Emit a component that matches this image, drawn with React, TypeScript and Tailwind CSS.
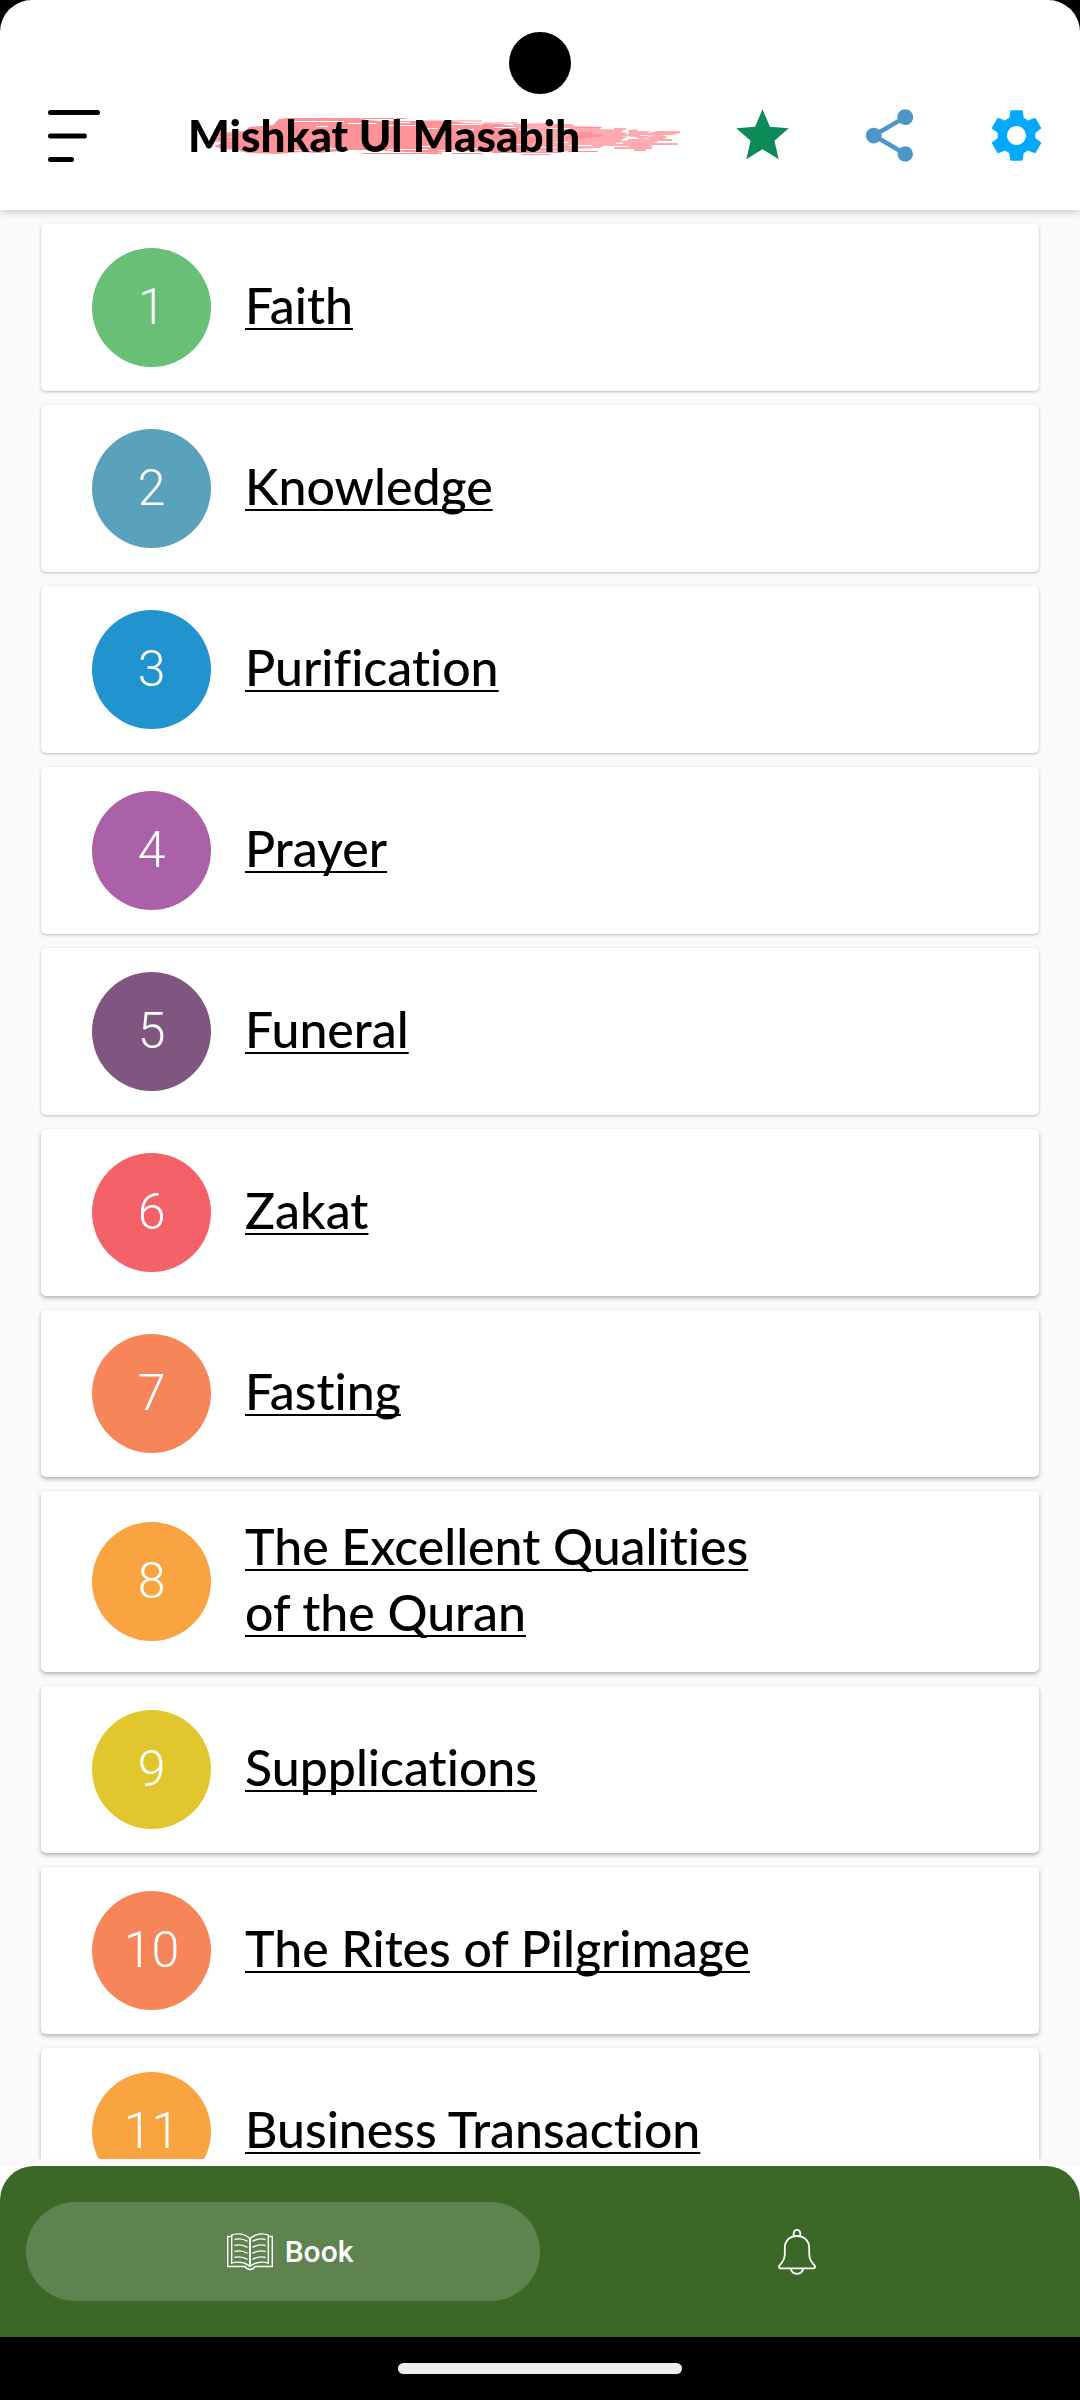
import { useState } from 'react';
import { MdSettings, MdShare, MdStar } from 'react-icons/md';

const chapters = [
  { title: 'Faith', color: 'bg-[#68bf75]' },
  { title: 'Knowledge', color: 'bg-[#5aa1bc]' },
  { title: 'Purification', color: 'bg-[#2193cf]' },
  { title: 'Prayer', color: 'bg-[#ab61a7]' },
  { title: 'Funeral', color: 'bg-[#7f5680]' },
  { title: 'Zakat', color: 'bg-[#f26268]' },
  { title: 'Fasting', color: 'bg-[#f6855a]' },
  { title: 'The Excellent Qualities of the Quran', color: 'bg-[#f9a441]' },
  { title: 'Supplications', color: 'bg-[#e2c62e]' },
  { title: 'The Rites of Pilgrimage', color: 'bg-[#f6855a]' },
  { title: 'Business Transaction', color: 'bg-[#f9a441]' },
];

function MenuIcon() {
  return (
    <svg width="52" height="56" viewBox="0 0 52 56" stroke="#000" strokeWidth="5" strokeLinecap="round">
      <path d="M2.5 5.500h47M2.5 29h34M2.5 52.500h21" />
    </svg>
  );
}

// Brush stroke behind the app title
function BrushStroke({ className }: { className?: string }) {
  return (
    <svg className={className} width="468" height="38" viewBox="0 0 468 38" fill="none" aria-hidden="true">
      <path
        fill="#fd9399"
        d="M4 18l12-3 18-1 3-4 24-2 6-6 8-1h72l8 2 14 1h68l16 2 36 1 20 3 46 1 6 3 8 14-9 4-30 1-22 3-40-1-20-2-24 3-30-1-34-2-30 1-24 2-18-1-22 2-30-1-10-3-16-1-8-3 12-4-16-2z"
      />
      <path
        fill="#fdabb1"
        d="M300 7l34-1 2 1h24l2 2 28 1-3 2 25 1-4 2 8 1-6 3 6 1-7 3 4 2-10 1 4 2-16 1-3 2-26 1 6 2-44 1 10-4-16-3 8-5-12-6z"
      />
      <path fill="#fd9399" d="M356 15h22l4 2h10l-4 3-16 1-6 2-16-1 6-3z" />
      <path
        fill="#fdabb1"
        d="M416 13l8-1 2 2h12l-3 2 18 1-4 2-20-1-4 2-14-1 6-2zM436 16l8-2h14l10 2-8 2h-10l6 2-6 3-12-1-4-2 8-1zM408 24l16-1 4-2 14 1 4 3-10 2h8l-8 4-16 1-4-3-8-1 4-2z"
      />
      <path
        stroke="#fdabb1"
        strokeWidth="2"
        d="M398 14h12M392 18h22M420 17h26M402 12h12M446 15h22M424 20h12M440 23h20M396 28h24M402 31h38M434 27h32M416 23h14M422 33h12M2 16h18M0 20h22M2 24h26M396 22h8"
      />
      <path
        stroke="#fd9399"
        strokeWidth="1"
        d="M150 1.500h32M184 1.500h10M210 4h60M272 6h34M20 30h22M28 34h40M150 36.500h80M240 36.500h30M280 35.500h70M356 34.500h30M310 37.500h28M364 10.500h26"
      />
      <path
        stroke="#fff"
        strokeWidth="1"
        d="M80 4.500h52M136 6.500h28M104 9.500h12M170 8.500h34M212 11.500h14M188 5.500h10M232 7.500h38M246 12.500h16M282 10.500h22M306 12.500h18M78 33.500h24M108 31.500h18M132 33.500h22M176 32.500h40M206 29.500h14M226 33.500h26M262 31.500h20M318 30.500h26M300 27.500h10M338 11.500h20M356 28.500h24M344 25.500h12"
      />
    </svg>
  );
}

function BookIcon() {
  return (
    <svg width="46" height="38" viewBox="0 0 46 38" fill="none" stroke="#fff" strokeWidth="1.4">
      <path d="M4.500 3.500H.7V33.500H18q2 3 5 3t5-3H45.300V3.500H41.500" />
      <path d="M23 5.500Q17.500.8 11 .9 7 1 4.700 2.200V30.200Q8 29 12 29.200 19 29.500 23 33.500" />
      <path d="M23 5.500Q28.500.8 35 .9 39 1 41.300 2.200V30.200Q38 29 34 29.200 27 29.500 23 33.500" />
      <path d="M23 5.500V33.500" strokeWidth="2" />
      <path d="M7.500 6.500q7-1.800 13 1.800M7.500 12.500q7-1.800 13 1.800M7.500 18.500q7-1.800 13 1.800M7.500 24.500q7-1.800 13 1.800" />
      <path d="M38.500 6.500q-7-1.800-13 1.800M38.500 12.500q-7-1.800-13 1.800M38.500 18.500q-7-1.800-13 1.800M38.500 24.500q-7-1.800-13 1.800" />
    </svg>
  );
}

function BellIcon() {
  return (
    <svg width="38" height="46" viewBox="0 0 38 46" fill="none" stroke="#fff" strokeWidth="1.8" strokeLinejoin="round">
      <path d="M15.700 7.500V4.200a3.300 3.300 0 0 1 6.600 0V7.500" />
      <path d="M19 7C11.500 7 6.800 12 6.800 19v6C6.800 31 4 34 1.500 36.500.5 38 1 39.300 2.500 39.300h33c1.500 0 2-1.300 1-2.800C34 34 31.200 31 31.200 25v-6C31.200 12 26.500 7 19 7z" />
      <path d="M12.500 39.500c1 3.500 3.500 5.300 6.500 5.300s5.500-1.800 6.500-5.300" />
    </svg>
  );
}

export default function App() {
  const [tab, setTab] = useState('book');

  return (
    <div className="flex h-screen flex-col bg-black font-['Lato',sans-serif] text-black">
      {/* Header */}
      <header className="relative z-10 rounded-t-[32px] bg-white pt-[60px] shadow-[0_2px_8px_rgba(0,0,0,0.2)]">
        <div className="absolute top-8 left-1/2 size-[62px] -translate-x-1/2 rounded-full bg-black" />
        <div className="flex h-[150px] items-center pr-8 pl-12">
          <button type="button" aria-label="Menu">
            <MenuIcon />
          </button>
          <div className="relative ml-[88px] flex-1">
            <BrushStroke className="absolute top-2 left-6" />
            <h1 className="relative text-[44px] leading-[52px] font-black whitespace-nowrap">Mishkat Ul Masabih</h1>
          </div>
          <div className="flex gap-16">
            <button type="button" aria-label="Favourites">
              <MdStar className="size-[63px] text-[#0c8a57]" />
            </button>
            <button type="button" aria-label="Share">
              <MdShare className="size-[63px] text-[#4c96c8]" />
            </button>
            <button type="button" aria-label="Settings">
              <MdSettings className="size-[63px] text-[#03a9fc]" />
            </button>
          </div>
        </div>
      </header>

      {/* Chapter list */}
      <main className="min-h-0 flex-1 overflow-y-auto bg-[#fafafa] [scrollbar-width:none]">
        <ul className="flex flex-col gap-3.5 px-[41px] py-3.5">
          {chapters.map((chapter, i) => (
            <li
              key={chapter.title}
              className={`flex min-h-[167px] items-center gap-[34px] rounded-[5px] bg-white py-[22px] pl-[51px] ${
                i < 5 ? 'shadow-[0_1px_3px_rgba(0,0,0,0.25)]' : 'shadow-[0_2px_4px_rgba(0,0,0,0.3)]'
              }`}
            >
              <span
                className={`flex size-[119px] shrink-0 items-center justify-center rounded-full font-['Roboto',sans-serif] text-[50px] font-light text-white ${chapter.color}`}
              >
                {i + 1}
              </span>
              <a
                href={`#chapter-${i + 1}`}
                className="max-w-[540px] pb-[5px] text-[50px] leading-[66px] font-medium underline decoration-2 underline-offset-4 [font-variant-ligatures:none] [text-decoration-skip-ink:none]"
              >
                {chapter.title}
              </a>
            </li>
          ))}
        </ul>
      </main>

      {/* Bottom navigation */}
      <div className="border-t-[7px] border-[#fafafa] bg-white">
        <nav className="grid grid-cols-2 rounded-t-[34px] bg-[#3b6727] px-[26px] py-9">
          <button
            type="button"
            onClick={() => setTab('book')}
            className={`flex h-[99px] items-center justify-center gap-3 rounded-full pl-3.5 font-['Roboto',sans-serif] text-[30px] font-medium text-white ${
              tab === 'book' ? 'bg-[#5e834e]' : ''
            }`}
          >
            <BookIcon />
            Book
          </button>
          <button
            type="button"
            aria-label="Notifications"
            onClick={() => setTab('alerts')}
            className={`flex h-[99px] items-center justify-center rounded-full ${
              tab === 'alerts' ? 'bg-[#5e834e]' : ''
            }`}
          >
            <BellIcon />
          </button>
        </nav>
      </div>
      <div className="flex h-[63px] items-center justify-center bg-black">
        <div className="h-[11px] w-[284px] rounded-full bg-[#ececec]" />
      </div>
    </div>
  );
}
